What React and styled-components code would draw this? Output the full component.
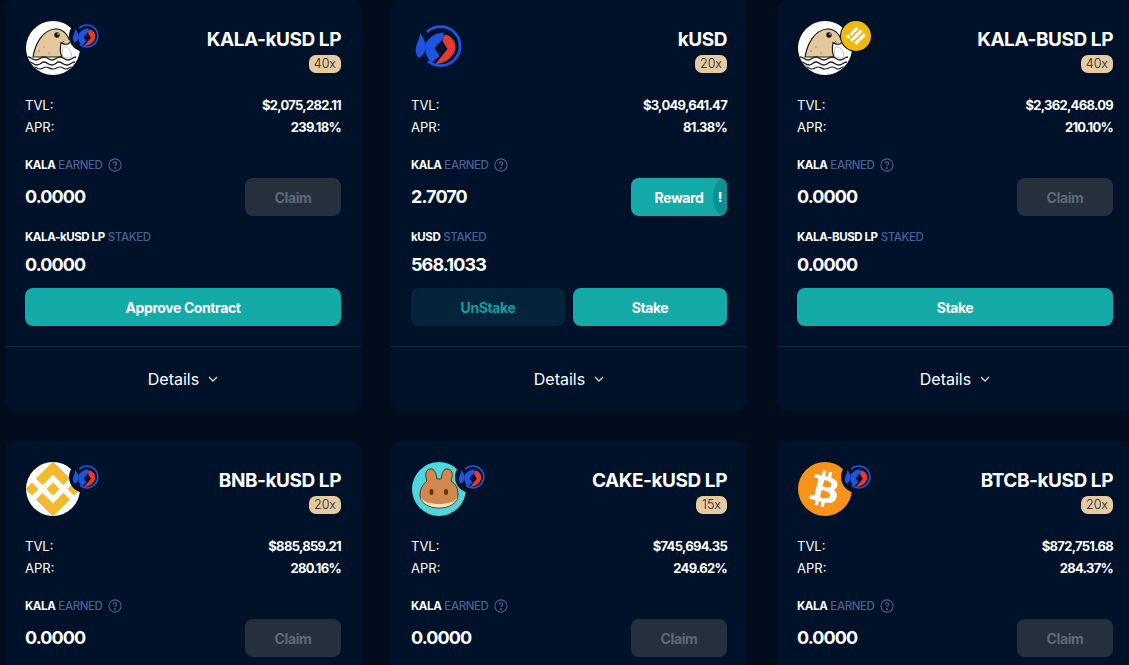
import React from "react";
import styled, { createGlobalStyle } from "styled-components";
import { FaBtc } from "react-icons/fa";
import { SiBinance } from "react-icons/si";

const GlobalStyle = createGlobalStyle`
  html, body {
    margin: 0;
    padding: 0;
    height: 665px;
    overflow: hidden;
    background: #020c1c;
    font-family: Inter, "Liberation Sans", sans-serif;
  }
  * { box-sizing: border-box; }
`;

const Page = styled.div`
  width: 1129px;
  height: 665px;
  overflow: hidden;
  padding-left: 5px;
`;

const Grid = styled.div`
  display: grid;
  grid-template-columns: repeat(3, 356px);
  column-gap: 30px;
  row-gap: 30px;
  width: 1130px;
`;

const Card = styled.div`
  background: #00122a;
  border-radius: 10px;
  height: 411px;
  display: flex;
  flex-direction: column;
  color: #fff;
`;

const Body = styled.div`
  padding: 21px 20px 0;
  height: 347px;
  border-bottom: 1px solid #13243c;
`;

const Header = styled.div`
  display: flex;
  justify-content: space-between;
  height: 54px;
`;

const LogoWrap = styled.div`
  position: relative;
  width: 54px;
  height: 54px;
  margin-left: 1px;
`;

const SoloLogo = styled.div`
  width: 48px;
  height: 48px;
  margin: 2px 0 0 3px;
`;

const MainLogo = styled.div`
  width: 54px;
  height: 54px;
  border-radius: 50%;
  overflow: hidden;
  background: ${(p) => p.$bg};
  display: flex;
  align-items: center;
  justify-content: center;
  color: ${(p) => p.$fg || "#fff"};
`;

const SubLogo = styled.div`
  position: absolute;
  left: ${(p) => (p.$big ? "42px" : "43px")};
  top: -1px;
  width: 32px;
  height: 32px;
  border-radius: 50%;
  background: #00122a;
  display: flex;
  align-items: center;
  justify-content: center;
`;

const BusdCoin = styled.div`
  width: 30px;
  height: 30px;
  border-radius: 50%;
  background: #f0b90b;
  display: flex;
  align-items: center;
  justify-content: center;
`;

const TitleBlock = styled.div`
  display: flex;
  flex-direction: column;
  align-items: flex-end;
  padding-top: 6px;
`;

const Title = styled.div`
  font-size: 19px;
  font-weight: 700;
  line-height: 26px;
  letter-spacing: -0.45px;
`;

const Badge = styled.div`
  margin-top: 2px;
  height: 18px;
  padding: 0 5px;
  min-width: 31px;
  border-radius: 7px;
  background: #e5cb9f;
  color: #1d2030;
  font-size: 12.5px;
  font-weight: 300;
  line-height: 18px;
  text-align: center;
`;

const Stats = styled.div`
  margin-top: 19px;
  display: flex;
  flex-direction: column;
`;

const StatRow = styled.div`
  display: flex;
  justify-content: space-between;
  height: 22px;
  line-height: 22px;
  font-size: 13px;
`;

const StatValue = styled.span`
  font-weight: 700;
  letter-spacing: -0.7px;
`;

const Label = styled.div`
  display: flex;
  align-items: center;
  gap: 3px;
  height: 16px;
  font-size: 11.5px;
  font-weight: 700;
  letter-spacing: -0.4px;
  color: #fff;
  margin-top: ${(p) => p.$top || "0"};
`;

const LabelMuted = styled.span`
  color: #4c5f94;
  font-weight: 500;
`;

const HelpIcon = styled.svg`
  margin-left: 3px;
  width: 14px;
  height: 14px;
`;

const EarnRow = styled.div`
  display: flex;
  justify-content: space-between;
  align-items: center;
  margin-top: 5px;
  height: 38px;
`;

const Amount = styled.div`
  font-size: 18px;
  font-weight: 700;
  letter-spacing: -0.9px;
  line-height: 24px;
`;

const StakedAmount = styled(Amount)`
  margin-top: 8px;
`;

const Btn = styled.button`
  position: relative;
  overflow: hidden;
  height: 38px;
  width: ${(p) => p.$w || "100%"};
  flex: ${(p) => (p.$grow ? "1" : "none")};
  border: none;
  border-radius: 8px;
  font-family: inherit;
  font-size: 14px;
  font-weight: 700;
  letter-spacing: -0.4px;
  background: ${(p) =>
    p.$kind === "disabled" ? "#262f3e" : p.$kind === "dark" ? "#03243a" : "#14aaa8"};
  color: ${(p) =>
    p.$kind === "disabled" ? "#5f6875" : p.$kind === "dark" ? "#0f9f9f" : "#fff"};
`;

const RewardTab = styled.span`
  position: absolute;
  right: 0;
  top: 0;
  bottom: 0;
  width: 14px;
  background: #0f8f8f;
  border-radius: 12px 0 0 12px / 19px 0 0 19px;
  color: #fff;
  line-height: 38px;
  text-align: center;
  font-size: 13px;
  font-weight: 800;
`;

const Actions = styled.div`
  display: flex;
  gap: 8px;
  margin-top: 11px;
`;

const Footer = styled.div`
  flex: 1;
  display: flex;
  align-items: center;
  justify-content: center;
  gap: 9px;
  font-size: 16px;
  padding-bottom: 1px;
`;

function Kusd({ size }) {
  return (
    <svg width={size} height={size} viewBox="6 4 48 48">
      <path d="M19 13A19.500 19.500 0 1 1 20 42" fill="none" stroke="#1d54e0" strokeWidth="2.800" />
      <path d="M12 14C16 19 18 25 17.500 30 17 34 14 37 11 39 8 36 7 32 8 28 9 23 12 20 12 14z" fill="#1d54e0" />
      <path d="M35 13.500C27 14 20 19 17 26 17 34 19 40 24 43.500L31.500 37 26.500 29 36.500 18.500z" fill="#1d54e0" />
      <path d="M37 15.500C43 16.500 47.500 22 47.500 28 47.500 36 38 44.500 27.500 45L39.500 30 34.500 22z" fill="#e8392e" />
    </svg>
  );
}

function Seal() {
  return (
    <svg width="54" height="54" viewBox="0 0 54 54">
      <path d="M7 36C9 24 16 9 29 8 35 7.500 41 12 43 18L46 20 42 23C38 24 36 22 35 22 34 27 34 32 36 36z" fill="#e5c79c" stroke="#1c1c1c" strokeWidth="1.200" />
      <path d="M37 26c3-1 6 1 8 5 1 2 1 5-1 6l-7-1c-1-3-1-7 0-10z" fill="#fff" stroke="#999" strokeWidth="0.600" />
      <circle cx="31" cy="14" r="2.700" fill="#111" />
      <circle cx="32" cy="13" r="0.800" fill="#fff" />
      <circle cx="13" cy="30" r="0.900" fill="#b8926a" />
      <circle cx="18" cy="26" r="0.800" fill="#b8926a" />
      <circle cx="23" cy="32" r="0.800" fill="#b8926a" />
      <path d="M38 20c-1 2-3 2-4 1" fill="none" stroke="#333" strokeWidth="0.800" />
      <path d="M2 36c4 0 4 3 8 3s4-3 8-3 4 3 8 3 4-3 8-3 4 3 8 3 4-3 8-3" fill="none" stroke="#222" strokeWidth="1.300" />
      <path d="M3 41c4 0 4 3 8 3s4-3 7-3 4 3 8 3 4-3 7-3 4 3 8 3 4-3 8-3" fill="none" stroke="#222" strokeWidth="1.300" />
      <path d="M8 46c3 0 3 2 6 2s4-2 6-2 4 2 7 2 4-2 7-2 4 2 6 2 3-2 6-2" fill="none" stroke="#222" strokeWidth="1.200" />
    </svg>
  );
}

function Cake() {
  return (
    <svg width="54" height="54" viewBox="0 0 54 54">
      <path d="M15 19C13 14 13 8 18 7 23 6 24 12 25 17H29C30 12 31 6 36 7 41 8 41 14 39 19 44 22 46 27 46 33 46 41 37 46 27 46 17 46 8 41 8 33 8 27 11 22 15 19z" fill="#d1884f" stroke="#633001" strokeWidth="1" />
      <path d="M8.500 35c1 6 9 10.500 18.500 10.500S44.500 41 45.500 35C43 40 36 42 27 42S11 40 8.500 35z" fill="#fee5b8" />
      <ellipse cx="19.500" cy="30" rx="2" ry="3" fill="#633001" />
      <ellipse cx="34" cy="30" rx="2" ry="3" fill="#633001" />
    </svg>
  );
}

function Busd() {
  return (
    <svg width="22" height="22" viewBox="0 0 20 20" fill="#fff">
      <path d="M10.500 1.500l2 2-6.500 6.500-2-2z" />
      <path d="M14 4l2 2-9.500 9.500-2-2z" />
      <path d="M3 8.500l2 2-2 2-2-2z" />
      <path d="M17 7.500l2 2-8.500 8.500-2-2z" />
    </svg>
  );
}

const logos = {
  kala: (
    <MainLogo $bg="#fff">
      <Seal />
    </MainLogo>
  ),
  bnb: (
    <MainLogo $bg="#fff" $fg="#f3ba2f">
      <SiBinance size={56} stroke="currentColor" strokeWidth={0.4} />
    </MainLogo>
  ),
  cake: (
    <MainLogo $bg="#4cd6de">
      <Cake />
    </MainLogo>
  ),
  btc: (
    <MainLogo $bg="#f7931a">
      <FaBtc size={36} style={{ transform: "rotate(14deg)" }} />
    </MainLogo>
  ),
};

const farms = [
  { title: "KALA-kUSD LP", mult: "40x", tvl: "$2,075,282.11", apr: "239.18%", logo: "kala", earned: "0.0000", staked: "0.0000", action: "approve" },
  { title: "kUSD", mult: "20x", tvl: "$3,049,641.47", apr: "81.38%", logo: "kusd", earned: "2.7070", staked: "568.1033", action: "both", reward: true },
  { title: "KALA-BUSD LP", mult: "40x", tvl: "$2,362,468.09", apr: "210.10%", logo: "kala", sub: "busd", earned: "0.0000", staked: "0.0000", action: "stake" },
  { title: "BNB-kUSD LP", mult: "20x", tvl: "$885,859.21", apr: "280.16%", logo: "bnb", earned: "0.0000", staked: "0.0000", action: "stake" },
  { title: "CAKE-kUSD LP", mult: "15x", tvl: "$745,694.35", apr: "249.62%", logo: "cake", earned: "0.0000", staked: "0.0000", action: "stake" },
  { title: "BTCB-kUSD LP", mult: "20x", tvl: "$872,751.68", apr: "284.37%", logo: "btc", earned: "0.0000", staked: "0.0000", action: "stake" },
];

function FarmCard({ farm }) {
  return (
    <Card>
      <Body>
        <Header>
          {farm.logo === "kusd" ? (
            <SoloLogo>
              <Kusd size={48} />
            </SoloLogo>
          ) : (
            <LogoWrap>
              {logos[farm.logo]}
              <SubLogo $big={farm.sub === "busd"}>
                {farm.sub === "busd" ? (
                  <BusdCoin>
                    <Busd />
                  </BusdCoin>
                ) : (
                  <Kusd size={27} />
                )}
              </SubLogo>
            </LogoWrap>
          )}
          <TitleBlock>
            <Title>{farm.title}</Title>
            <Badge>{farm.mult}</Badge>
          </TitleBlock>
        </Header>
        <Stats>
          <StatRow>
            <span>TVL:</span>
            <StatValue>{farm.tvl}</StatValue>
          </StatRow>
          <StatRow>
            <span>APR:</span>
            <StatValue>{farm.apr}</StatValue>
          </StatRow>
        </Stats>
        <Label $top="19px">
          KALA <LabelMuted>EARNED</LabelMuted>
          <HelpIcon viewBox="0 0 16 16" fill="none" stroke="#4c5f94" strokeWidth="1.200">
            <circle cx="8" cy="8" r="7" />
            <path d="M6 6.300c0-1.200 1-1.900 2-1.900s2 .7 2 1.800c0 1.500-2 1.500-2 3" />
            <circle cx="8" cy="11.500" r="0.500" fill="#4c5f94" />
          </HelpIcon>
        </Label>
        <EarnRow>
          <Amount>{farm.earned}</Amount>
          {farm.reward ? (
            <Btn $w="96px">
              Reward
              <RewardTab>!</RewardTab>
            </Btn>
          ) : (
            <Btn $w="96px" $kind="disabled">
              Claim
            </Btn>
          )}
        </EarnRow>
        <Label $top="13px">
          {farm.title} <LabelMuted>STAKED</LabelMuted>
        </Label>
        <StakedAmount>{farm.staked}</StakedAmount>
        <Actions>
          {farm.action === "approve" && <Btn>Approve Contract</Btn>}
          {farm.action === "stake" && <Btn>Stake</Btn>}
          {farm.action === "both" && (
            <>
              <Btn $grow $kind="dark">
                UnStake
              </Btn>
              <Btn $grow>Stake</Btn>
            </>
          )}
        </Actions>
      </Body>
      <Footer>
        Details
        <svg width="10" height="6" viewBox="0 0 10 6" fill="none" stroke="#cfd6e0" strokeWidth="1.300">
          <path d="M1 1l4 4 4-4" />
        </svg>
      </Footer>
    </Card>
  );
}

export default function App() {
  return (
    <>
      <GlobalStyle />
      <Page>
        <Grid>
          {farms.map((farm) => (
            <FarmCard key={farm.title} farm={farm} />
          ))}
        </Grid>
      </Page>
    </>
  );
}
